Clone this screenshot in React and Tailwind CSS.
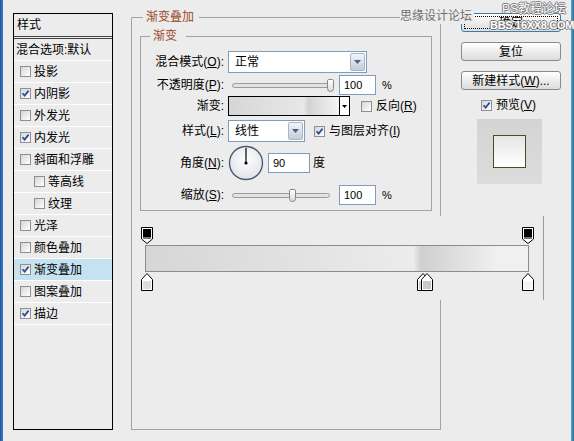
import React from 'react';

const Check = ({ checked }) => (
  <span className="inline-flex w-[11px] h-[11px] shrink-0 items-center justify-center border border-[#8e8f8f] bg-gradient-to-br from-[#d6d6d6] to-white">
    {checked && (
      <svg width="9" height="9" viewBox="0 0 9 9">
        <path d="M1.5 4.2 L3.6 6.6 L7.6 1.6" fill="none" stroke="#2b4c9b" strokeWidth="1.7" />
      </svg>
    )}
  </span>
);

const Arrow = () => (
  <svg width="7" height="4" viewBox="0 0 7 4">
    <path d="M0 0H7L3.5 4Z" fill="#4d6185" />
  </svg>
);

const Select = ({ width, value }) => (
  <div className={`flex items-center h-[22px] ${width} border border-[#7f9db9] bg-white`}>
    <span className="flex-1 pl-[6px]">{value}</span>
    <span className="flex items-center justify-center w-[15px] h-[18px] mr-[1px] rounded-[2px] border border-[#a9b6c9] bg-gradient-to-b from-[#f2f5fa] to-[#c3ccd9]">
      <Arrow />
    </span>
  </div>
);

const Slider = ({ thumb }) => (
  <div className="relative w-[98px] h-[5px] ml-[4px] rounded-full border border-[#9c9c9c] bg-[#e2e2e2]">
    <div className={`absolute top-[-5px] ${thumb} w-[7px] h-[13px] rounded-b-[4px] rounded-t-[2px] border border-[#858585] bg-gradient-to-b from-white to-[#dadada]`} />
  </div>
);

const NumBox = ({ width, value }) => (
  <div className={`flex items-center h-[20px] ${width} border border-[#7f9db9] bg-white pl-[4px] text-[11px]`}>
    {value}
  </div>
);

const Label = ({ children }) => (
  <span className="w-[83px] shrink-0 text-right">{children}</span>
);

const TopStop = () => (
  <svg width="12" height="17" viewBox="0 0 12 17">
    <path d="M0.5 0.5H11.5V12L6 16.5L0.5 12Z" fill="#fff" stroke="#000" />
    <rect x="2" y="2" width="8" height="8" fill="#000" />
    <rect x="2" y="10" width="8" height="2" fill="#777" />
  </svg>
);

const BottomStop = ({ color }) => (
  <svg width="12" height="18" viewBox="0 0 12 18">
    <path d="M6 0.5L11.5 6.5V17.5H0.5V6.5Z" fill="#fff" stroke="#000" />
    <rect x="2" y="8" width="8" height="8" fill={color} />
  </svg>
);

const Btn = ({ children, focus }) => (
  <div
    className={`flex items-center justify-center w-[100px] h-[19px] rounded-[3px] border bg-gradient-to-b from-white to-[#dcdcdc] ${
      focus ? 'border-[#3f7aa8] outline-1 outline-dotted outline-black outline-offset-[-4px]' : 'border-[#8a8a8a]'
    }`}
  >
    {children}
  </div>
);

const styles = [
  { t: '投影' },
  { t: '内阴影', c: true },
  { t: '外发光' },
  { t: '内发光', c: true },
  { t: '斜面和浮雕' },
  { t: '等高线', i: true },
  { t: '纹理', i: true },
  { t: '光泽' },
  { t: '颜色叠加' },
  { t: '渐变叠加', c: true, a: true },
  { t: '图案叠加' },
  { t: '描边', c: true },
];

export default function App() {
  return (
    <div className="relative flex items-start w-[574px] h-[441px] overflow-hidden bg-[#ececec] text-[12px] leading-[16px] text-black font-['Liberation_Sans','Noto_Sans_CJK_SC',sans-serif]">
      <div className="w-[3px] h-full shrink-0 bg-gradient-to-r from-[#1b55a0] to-[#3f7cc4]" />

      {/* style list */}
      <div className="ml-[10px] mt-[13px] w-[100px] h-[417px] shrink-0 border border-black">
        <div className="flex items-center h-[25px] pl-[3px] border-b-[3px] border-double border-[#444]">样式</div>
        <div className="flex items-center h-[22px] pl-[2px] border-b border-white">混合选项:默认</div>
        {styles.map((s) => (
          <div
            key={s.t}
            className={`flex items-center gap-[3px] h-[22px] border-b border-white ${s.i ? 'pl-[20px]' : 'pl-[6px]'} ${
              s.a ? 'bg-[#c6e2f1]' : ''
            }`}
          >
            <Check checked={s.c} />
            <span>{s.t}</span>
          </div>
        ))}
      </div>

      {/* settings */}
      <fieldset className="ml-[18px] mt-[9px] w-[310px] h-[421px] shrink-0 border border-[#a3a3a3] px-[8px]">
        <legend className="ml-[3px] pl-[3px] pr-[5px] text-[#9b4a2b]">渐变叠加</legend>
        <fieldset className="mt-[3px] h-[183px] border border-[#a3a3a3]">
          <legend className="ml-[9px] pl-[3px] pr-[9px] text-[#9b4a2b]">渐变</legend>

          <div className="flex items-center mt-[7px] h-[22px]">
            <Label>混合模式(<u>O</u>):</Label>
            <div className="ml-[4px]">
              <Select width="w-[139px]" value="正常" />
            </div>
          </div>

          <div className="flex items-center mt-[2px] h-[20px]">
            <Label>不透明度(<u>P</u>):</Label>
            <div className="ml-[4px] flex items-center">
              <Slider thumb="left-[94px]" />
              <div className="ml-[9px]">
                <NumBox width="w-[37px]" value="100" />
              </div>
              <span className="ml-[6px] text-[11px]">%</span>
            </div>
          </div>

          <div className="flex items-center mt-[1px] h-[20px]">
            <Label>渐变:</Label>
            <div className="ml-[4px] flex h-[20px] w-[122px] border border-black">
              <div className="flex-1 bg-[linear-gradient(90deg,#d6d6d6_0%,#e8e8e8_68%,#d3d3d3_72%,#f4f4f4_100%)]" />
              <div className="flex w-[10px] items-center justify-center border-l border-black bg-white">
                <svg width="5" height="3" viewBox="0 0 5 3"><path d="M0 0H5L2.5 3Z" fill="#000" /></svg>
              </div>
            </div>
            <div className="ml-[11px] flex items-center gap-[4px]">
              <Check />
              <span>反向(<u>R</u>)</span>
            </div>
          </div>

          <div className="flex items-center mt-[4px] h-[22px]">
            <Label>样式(<u>L</u>):</Label>
            <div className="ml-[4px]">
              <Select width="w-[77px]" value="线性" />
            </div>
            <div className="ml-[9px] flex items-center gap-[4px]">
              <Check checked />
              <span>与图层对齐(<u>I</u>)</span>
            </div>
          </div>

          <div className="flex items-center mt-[3px] h-[36px]">
            <Label>角度(<u>N</u>):</Label>
            <svg className="ml-[4px]" width="36" height="36" viewBox="0 0 36 36">
              <defs>
                <radialGradient id="dial" cx="50%" cy="40%" r="60%">
                  <stop offset="0" stopColor="#ffffff" />
                  <stop offset="1" stopColor="#e2e3e8" />
                </radialGradient>
              </defs>
              <circle cx="18" cy="18" r="16.5" fill="url(#dial)" stroke="#4b5772" strokeWidth="1.4" />
              <line x1="18" y1="18" x2="18" y2="3" stroke="#000" strokeWidth="1.2" />
              <circle cx="18" cy="18" r="1.6" fill="#000" />
            </svg>
            <div className="ml-[4px]">
              <NumBox width="w-[42px]" value="90" />
            </div>
            <span className="ml-[3px]">度</span>
          </div>

          <div className="flex items-center mt-[4px] h-[20px]">
            <Label>缩放(<u>S</u>):</Label>
            <div className="ml-[4px] flex items-center">
              <Slider thumb="left-[56px]" />
              <div className="ml-[9px]">
                <NumBox width="w-[37px]" value="100" />
              </div>
              <span className="ml-[6px] text-[11px]">%</span>
            </div>
          </div>
        </fieldset>
      </fieldset>

      {/* buttons */}
      <div className="ml-[20px] mt-[13px] w-[100px] shrink-0 flex flex-col">
        <Btn focus>确定</Btn>
        <div className="mt-[10px]"><Btn>复位</Btn></div>
        <div className="mt-[10px]"><Btn>新建样式(<u>W</u>)...</Btn></div>
        <div className="mt-[8px] h-[14px] pl-[20px] flex items-center gap-[4px]">
          <Check checked />
          <span>预览(<u>V</u>)</span>
        </div>
        <div className="mt-[7px] ml-[16px] flex h-[65px] w-[65px] items-center justify-center bg-gradient-to-b from-[#d4d4d4] to-[#dcdcdc]">
          <div className="h-[33px] w-[33px] border border-[#3f5220] bg-gradient-to-b from-[#e6e6e6] to-white" />
        </div>
      </div>

      <div className="flex-1" />
      <div className="w-[3px] h-full shrink-0 bg-gradient-to-r from-[#5aa6c8] to-[#1f6f9c]" />

      {/* gradient editor lying over the dialog */}
      <div className="absolute left-[133px] top-[216px] w-[411px] h-[84px] bg-[#ececec] border-r border-[#9a9a9a]">
        <div className="relative ml-[8px] mt-[11px] w-[393px] h-[17px]">
          <div className="absolute left-0 top-0"><TopStop /></div>
          <div className="absolute left-[381px] top-0"><TopStop /></div>
        </div>
        <div className="ml-[12px] mt-[1px] w-[384px] h-[27px] border border-[#8c8c8c] bg-[linear-gradient(90deg,#d6d6d6_0%,#e2e2e2_40%,#ececec_70%,#cfcfcf_72%,#f0f0f0_92%,#f0f0f0_100%)]" />
        <div className="relative ml-[8px] mt-[1px] w-[393px] h-[18px]">
          <div className="absolute left-0 top-0"><BottomStop color="#dcdcdc" /></div>
          <div className="absolute left-[276px] top-0"><BottomStop color="#d4d4d4" /></div>
          <div className="absolute left-[280px] top-0"><BottomStop color="#c8c8c8" /></div>
          <div className="absolute left-[381px] top-0"><BottomStop color="#f4f4f4" /></div>
        </div>
      </div>

      {/* watermarks */}
      <div className="absolute left-[400px] top-[8px] pr-[2px] bg-[#ececec] text-[#707070]">思缘设计论坛</div>
      <div className="absolute left-[502px] top-[1px] text-[12px] text-white [text-shadow:1px_0_#7a7a7a,-1px_0_#7a7a7a,0_1px_#7a7a7a,0_-1px_#7a7a7a]">
        PS教程论坛
      </div>
      <div className="absolute left-[490px] top-[17px] text-[11px] font-bold tracking-[-0.3px] text-white [text-shadow:1px_0_#7a7a7a,-1px_0_#7a7a7a,0_1px_#7a7a7a,0_-1px_#7a7a7a]">
        BBS.16XX8.COM
      </div>
    </div>
  );
}
